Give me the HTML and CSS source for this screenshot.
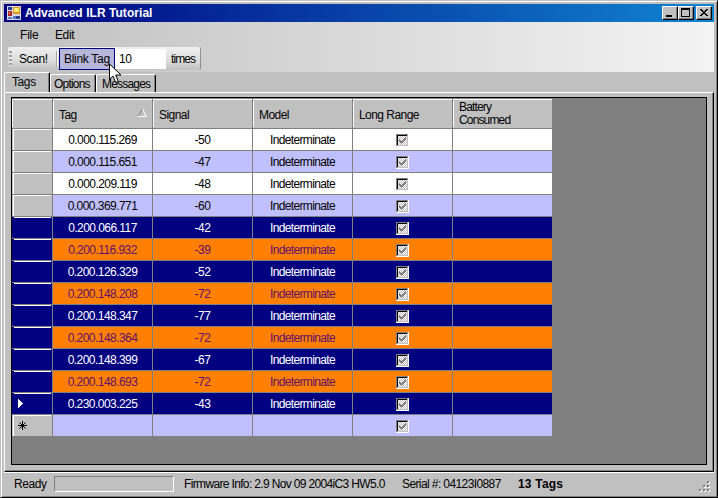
FILE: index.html
```html
<!DOCTYPE html>
<html lang="en">
<head>
<meta charset="utf-8">
<title>Advanced ILR Tutorial</title>
<link rel="stylesheet" href="styles.css">
</head>
<body>
<svg class="defs" width="0" height="0">
  <defs>
    <pattern id="dither" width="2" height="2" patternUnits="userSpaceOnUse"><rect width="2" height="2" fill="#fff"/><path fill="#c4c0c4" d="M0 0h1v1H0zM1 1h1v1H1z"/></pattern>
    <symbol id="check" viewBox="0 0 13 13">
      <path fill="#fff" d="M0 0h13v13H0z"/><path fill="#808080" d="M0 0h12v1H1v11H0z"/>
      <path fill="#c0c0c0" d="M1 1h11v11H1z"/><path fill="#000" d="M1 1h10v1H2v9H1z"/>
      <path fill="url(#dither)" d="M2 2h9v9H2z"/>
      <path fill="#808080" d="M3 5h1v1h1v1h1V6h1V5h1V4h1V3h1v3H9v1H8v1H7v1H6v1H5V9H4V8H3z"/>
    </symbol>
  </defs>
</svg>
<div class="window">
  <header class="titlebar">
    <svg class="app-icon" width="14" height="14" viewBox="0 0 14 14" shape-rendering="crispEdges">
      <path fill="#d8d8e8" d="M0 0h14v14H0z"/>
      <path fill="#283c90" d="M1 1h4v3H1zM9 10h4v3H9z"/><path fill="#5878c0" d="M6 10h3v3H6zM1 11h4v2H1z"/>
      <path fill="#b02828" d="M1 5h4v5H1z"/><path fill="#f09080" d="M2 6h1v2H2z"/>
      <path fill="#d89820" d="M6 1h7v7H6z"/><path fill="#ffe878" d="M7 2h5v4H7z"/>
    </svg>
    <h1>Advanced ILR Tutorial</h1>
    <div class="caption-buttons">
      <span class="cap"><svg width="14" height="12" shape-rendering="crispEdges"><path d="M3 8h6v2H3z"/></svg></span>
      <span class="cap"><svg width="14" height="12" shape-rendering="crispEdges"><path fill-rule="evenodd" d="M2 1h9v9H2zM3 3v6h7V3z"/></svg></span>
      <span class="cap close"><svg width="14" height="12" shape-rendering="crispEdges"><path d="M3 2h2v1h1v1h2V3h1V2h2v1h-1v1H9v1H8v1h1v1h1v1h1v1H9V8H8V7H6v1H5v1H3V8h1V7h1V6h1V5H5V4H4V3H3z"/></svg></span>
    </div>
  </header>
  <div class="bars">
    <nav class="menu"><span class="file">File</span><span class="edit">Edit</span></nav>
    <div class="toolbar">
      <i class="grip"></i>
      <span class="scan">Scan!</span>
      <i class="sep"></i>
      <span class="blink">Blink Tag
        <svg class="cursor" width="13" height="21" viewBox="0 0 13 21"><path fill="#fff" stroke="#000" d="M.5 1v15.5L4 13l2.7 6.5 2.6-1L6.7 12H12z"/></svg>
      </span>
      <span class="count">10</span>
      <span class="times">times</span>
    </div>
  </div>
  <div class="tabs">
    <span class="tab active">Tags</span><span class="tab options">Options</span><span class="tab messages">Messages</span>
  </div>
  <main class="page">
    <div class="gridview">
      <table>
        <colgroup><col class="rowhead"><col><col><col><col><col></colgroup>
        <thead><tr>
          <th></th>
          <th>Tag<svg class="sort" width="9" height="8" viewBox="0 0 9 8"><path d="M4.5 0L0 7.5" stroke="#808080" fill="none"/><path d="M4.5 0L8.5 7.5H0" stroke="#fff" fill="none"/></svg></th>
          <th>Signal</th><th>Model</th><th>Long Range</th><th class="battery">Battery<br>Consumed</th>
        </tr></thead>
        <tbody>
          <tr><th></th><td class="id">0.000.115.269</td><td>-50</td><td class="model">Indeterminate</td><td><svg class="cb"><use href="#check"/></svg></td><td></td></tr>
          <tr class="alt"><th></th><td class="id">0.000.115.651</td><td>-47</td><td class="model">Indeterminate</td><td><svg class="cb"><use href="#check"/></svg></td><td></td></tr>
          <tr><th></th><td class="id">0.000.209.119</td><td>-48</td><td class="model">Indeterminate</td><td><svg class="cb"><use href="#check"/></svg></td><td></td></tr>
          <tr class="alt"><th></th><td class="id">0.000.369.771</td><td>-60</td><td class="model">Indeterminate</td><td><svg class="cb"><use href="#check"/></svg></td><td></td></tr>
          <tr class="navy"><th></th><td class="id">0.200.066.117</td><td>-42</td><td class="model">Indeterminate</td><td><svg class="cb"><use href="#check"/></svg></td><td></td></tr>
          <tr class="orange"><th></th><td class="id">0.200.116.932</td><td>-39</td><td class="model">Indeterminate</td><td><svg class="cb"><use href="#check"/></svg></td><td></td></tr>
          <tr class="navy"><th></th><td class="id">0.200.126.329</td><td>-52</td><td class="model">Indeterminate</td><td><svg class="cb"><use href="#check"/></svg></td><td></td></tr>
          <tr class="orange"><th></th><td class="id">0.200.148.208</td><td>-72</td><td class="model">Indeterminate</td><td><svg class="cb"><use href="#check"/></svg></td><td></td></tr>
          <tr class="navy"><th></th><td class="id">0.200.148.347</td><td>-77</td><td class="model">Indeterminate</td><td><svg class="cb"><use href="#check"/></svg></td><td></td></tr>
          <tr class="orange"><th></th><td class="id">0.200.148.364</td><td>-72</td><td class="model">Indeterminate</td><td><svg class="cb"><use href="#check"/></svg></td><td></td></tr>
          <tr class="navy"><th></th><td class="id">0.200.148.399</td><td>-67</td><td class="model">Indeterminate</td><td><svg class="cb"><use href="#check"/></svg></td><td></td></tr>
          <tr class="orange"><th></th><td class="id">0.200.148.693</td><td>-72</td><td class="model">Indeterminate</td><td><svg class="cb"><use href="#check"/></svg></td><td></td></tr>
          <tr class="navy"><th><svg class="mark" width="10" height="10" shape-rendering="crispEdges"><path fill="#fff" d="M0 0h1v1h1v1h1v1h1v1h1v1H4v1H3v1H2v1H1v1H0z"/></svg></th><td class="id">0.230.003.225</td><td>-43</td><td class="model">Indeterminate</td><td><svg class="cb"><use href="#check"/></svg></td><td></td></tr>
          <tr class="alt new"><th><svg class="mark" width="10" height="10"><path stroke="#000" d="M4.5 0v9M0 4.5h9M1.5 1.5l6 6M7.5 1.5l-6 6"/></svg></th><td></td><td></td><td></td><td><svg class="cb"><use href="#check"/></svg></td><td></td></tr>
        </tbody>
      </table>
    </div>
  </main>
  <footer class="status">
    <span class="ready">Ready</span>
    <i class="progress"></i>
    <span class="firmware">Firmware Info: 2.9 Nov 09 2004iC3 HW5.0</span>
    <span class="serial">Serial #: 04123I0887</span>
    <b class="total">13 Tags</b>
    <svg class="resize" width="12" height="12" shape-rendering="crispEdges"><path fill="#fff" d="M9 1h2v2H9zM5 5h2v2H5zM9 5h2v2H9zM1 9h2v2H1zM5 9h2v2H5zM9 9h2v2H9z"/><path fill="#808080" d="M8 0h2v2H8zM4 4h2v2H4zM8 4h2v2H8zM0 8h2v2H0zM4 8h2v2H4zM8 8h2v2H8z"/></svg>
  </footer>
</div>
</body>
</html>
```

FILE: styles.css
```css
* { box-sizing: border-box; }
body {
  margin: 0;
  font: 12px/14px "Liberation Sans", Arial, sans-serif;
  letter-spacing: -0.4px;
  color: #000;
  white-space: nowrap;
}
.defs { position: absolute; }
.window {
  width: 718px;
  height: 498px;
  padding: 3px;
  background: #c0c0c0;
  border: 1px solid #000;
  border-color: #c0c0c0 #000 #000 #c0c0c0;
  box-shadow: inset 1px 1px #fff, inset -1px -1px #808080;
  display: flex;
  flex-direction: column;
}
.titlebar {
  height: 18px;
  flex: none;
  display: flex;
  align-items: center;
  padding: 0 2px 0 3px;
  background: linear-gradient(90deg, #000080, #1084d0);
}
.app-icon { flex: none; }
h1 {
  margin: 0 auto 0 4px;
  font-size: 12px;
  line-height: 18px;
  letter-spacing: 0.05px;
  color: #fff;
}
.caption-buttons { display: flex; }
.cap {
  width: 16px;
  height: 14px;
  border: 1px solid;
  border-color: #fff #000 #000 #fff;
  box-shadow: inset -1px -1px #808080;
  background: #c0c0c0;
}
.cap.close { margin-left: 2px; }
.cap svg { display: block; }
.bars {
  height: 50px;
  flex: none;
  background: linear-gradient(90deg, #c0c0c0, #f3f3f3);
}
.menu { height: 25px; display: flex; padding: 6px 0 0 16px; }
.file { width: 35px; letter-spacing: -0.2px; }
.toolbar {
  width: 193px;
  height: 23px;
  margin-left: 4px;
  display: flex;
  align-items: center;
  border-radius: 2px;
  border-right: 1px solid #909090;
  background: linear-gradient(#f0f0f0, #dcdcdc 60%, #c0c0c0);
}
.grip {
  width: 3px;
  height: 15px;
  margin: 0 7px 0 1px;
  background: repeating-linear-gradient(#a0a0a0 0 2px, #e8e8e8 2px 4px);
}
.scan { width: 37px; letter-spacing: -0.4px; }
.sep { width: 2px; height: 16px; border-left: 1px solid #a0a0a0; border-right: 1px solid #fff; margin-right: 1px; }
.blink {
  position: relative;
  width: 56px;
  height: 22px;
  padding: 3px 0 0 4px;
  border: 1px solid #000080;
  background: #b6b6d8;
  letter-spacing: -0.3px;
}
.cursor { position: absolute; left: 49px; top: 14px; z-index: 2; }
.count { width: 51px; height: 20px; padding: 3px 0 0 4px; background: #fff; }
.times { padding-left: 5px; letter-spacing: -0.9px; }
.tabs {
  height: 20px;
  flex: none;
  display: flex;
  align-items: flex-end;
}
.tab {
  height: 18px;
  padding: 2px 0 0 3px;
  border-top: 1px solid #fff;
  border-left: 1px solid #fff;
  border-right: 1px solid #000;
  box-shadow: inset -1px 0 #808080;
  border-radius: 2px 2px 0 0;
  letter-spacing: -0.8px;
}
.tab.active { width: 46px; height: 21px; padding: 2px 0 0 7px; margin-bottom: -1px; background: #c0c0c0; letter-spacing: -0.4px; }
.options { width: 46px; }
.messages { width: 60px; padding-left: 5px; }
.page {
  height: 380px;
  flex: none;
  padding: 4px 6px 6px 6px;
  border: 1px solid #000;
  border-color: #fff #000 #000 #fff;
  box-shadow: inset -1px -1px #808080;
}
.gridview {
  height: 368px;
  border: 1px solid #000;
  background: #808080;
  padding-top: 1px;
}
table {
  width: 540px;
  table-layout: fixed;
  border-collapse: separate;
  border-spacing: 0;
}
col.rowhead { width: 41px; }
col { width: 100px; }
col:last-child { width: 99px; }
th, td { padding: 0; font-weight: normal; border-right: 1px solid #808080; border-bottom: 1px solid #808080; }
thead th {
  position: relative;
  height: 30px;
  padding: 3px 0 0 6px;
  text-align: left;
  background: linear-gradient(#fff, #fff) 0 0 / 100% 1px no-repeat, linear-gradient(#fff, #fff) 0 2px / 1px 26px no-repeat, #c0c0c0;
  letter-spacing: -0.55px;
}
thead th:last-child, td:last-child { border-right: 0; }
thead .battery { line-height: 13px; padding-top: 0; letter-spacing: -0.85px; }
.sort { position: absolute; left: 85px; top: 10px; }
tbody tr { height: 22px; background: #fff; }
tbody td { height: 22px; padding-top: 1px; text-align: center; line-height: 14px; }
tbody th {
  height: 22px;
  background: linear-gradient(#fff, #fff) 2px 0 / 37px 1px no-repeat, linear-gradient(#fff, #fff) 1px 0 / 1px 100% no-repeat, #c0c0c0;
  text-align: left;
}
tbody .alt { background: #c0c0ff; }
tbody .navy { background: #000080; color: #fff; }
tbody .orange { background: #ff8000; color: #60106c; }
.navy th, .orange th { background: linear-gradient(#fff, #fff) 2px 0 / 37px 1px no-repeat, #000080; }
tbody .new th, tbody .new td { border-bottom: 0; height: 21px; }
tbody .new { height: 21px; }
.id { letter-spacing: -0.55px; }
.model { letter-spacing: -0.65px; }
.cb { display: block; width: 13px; height: 13px; margin: 0 auto; shape-rendering: crispEdges; }
.mark { display: block; margin-left: 6px; }
.status {
  flex: 1;
  display: flex;
  align-items: center;
  border-top: 1px solid #fff;
  padding: 1px 3px 0 10px;
}
.ready { width: 40px; }
.progress {
  width: 120px;
  height: 16px;
  margin-right: 10px;
  border: 1px solid #808080;
  border-right-color: #fff;
  border-bottom-color: #fff;
}
.firmware { width: 218px; letter-spacing: -0.65px; }
.serial { width: 116px; letter-spacing: -0.6px; }
.total { letter-spacing: 0.2px; }
.resize { margin: 6px 0 0 auto; }
```
